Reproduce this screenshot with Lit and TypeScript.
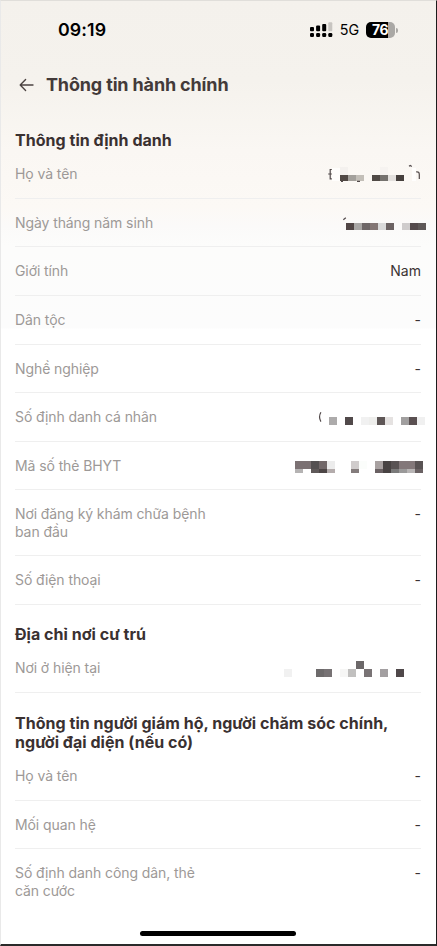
import { LitElement, html, svg, css } from "lit";
import { customElement, property } from "lit/decorators.js";

type Block = [x: number, y: number, w: number, h: number, fill: string];
interface Field {
  label: string;
  height: number;
  value?: string;
  top?: number;
  blocks?: Block[];
  strokes?: string[];
}
interface Section {
  title: string;
  kind: string;
  fields: Field[];
}

const run = (x: number, y: number, h: number, fills: string[]): Block[] =>
  fills
    .map((f, i) => [x + i * 8, y, 8, h, f] as Block)
    .filter((b) => b[4] !== "");

const sections: Section[] = [
  {
    title: "Thông tin định danh",
    kind: "identity",
    fields: [
      {
        label: "Họ và tên", height: 49, top: 150,
        blocks: [
          [332, 168, 8, 13, "#fffefc"],
          [340, 167, 8, 8, "#f4f1ee"],
          [380, 167, 8, 8, "#f6f3f0"],
          [412, 168, 4, 13, "#fffefd"],
          ...run(340, 175, 6, ["#504844", "#a3a09b", "#c3bfb8", "", "#504a46", "#75726e", "#e3e0dd", "#46403d"]),
        ],
        strokes: ["M331.8 169.5H330.2V178.8H331.8M328.2 174H331.8", "M409 166.3L410.2 165.5L411.8 166.6", "M416.2 171.9Q419.3 171.4 419.3 174.6V179", "M341 181.4H343M357 181.4H360"],
      },
      {
        label: "Ngày tháng năm sinh", height: 48, top: 199,
        blocks: run(346, 223, 7, ["#514645", "#a9a7a5", "#6e6767", "#837674", "#dadada", "#6c6363", "", "#cfcccc", "#544a4b", "#5e5857"]),
        strokes: ["M343.3 219.8L345.8 217.8"],
      },
      { label: "Giới tính", height: 49, value: "Nam" },
      { label: "Dân tộc", height: 49, value: "-" },
      { label: "Nghề nghiệp", height: 48, value: "-" },
      {
        label: "Số định danh cá nhân", height: 49, top: 393,
        blocks: run(329, 417, 8, ["#adabab", "", "#51494a", "", "#f1f1f1", "#eeeeec", "#5e5656", "#e5e2e1", "", "#a19f9f", "#5a5051", "#f0f0f0"]),
        strokes: ["M320.9 412.3Q318.2 416.9 320.9 421.6"],
      },
      {
        label: "Mã số thẻ BHYT", height: 48, top: 442,
        blocks: [
          ...run(295, 461, 8, ["#7b7173", "#7b7173", "#545051", "#726869", "#ececec", "", "", "#d0cccc", "#fbfdfb", "", "#a8a1a1", "#484343", "#595354", "#83787a", "#83787a", "#595354"]),
          ...run(295, 469, 4, ["#b5b3b3", "", "#5f5959", "#4c4545", "#b4acac", "", "", "#847c7c", "", "", "#6a6163", "#484343", "#7a7a7a", "#9a9999", "#b8b5b5", "#6a6163"]),
        ],
      },
      { label: "Nơi đăng ký khám chữa bệnh ban đầu", height: 66, value: "-" },
      { label: "Số điện thoại", height: 49, value: "-" },
    ],
  },
  {
    title: "Địa chỉ nơi cư trú",
    kind: "address",
    fields: [
      {
        label: "Nơi ở hiện tại", height: 49, top: 644,
        blocks: [
          [356, 661, 8, 8, "#6c6869"],
          ...run(284, 669, 8, ["#f1f1f1", "", "", "", "#6d6a6b", "#777274", "", "#f6f6f5", "#c1c0bf", "", "#797375", "", "#a39fa1", "", "#4f484a"]),
        ],
      },
    ],
  },
  {
    title: "Thông tin người giám hộ, người chăm sóc chính, người đại diện (nếu có)",
    kind: "guardian",
    fields: [
      { label: "Họ và tên", height: 49, value: "-" },
      { label: "Mối quan hệ", height: 48, value: "-" },
      { label: "Số định danh công dân, thẻ căn cước", height: 66, value: "-" },
    ],
  },
];

@customElement("status-bar")
class StatusBar extends LitElement {
  static styles = css`
    :host { display: flex; height: 58px; justify-content: space-between; align-items: center; padding: 0 38px 0 57px; box-sizing: border-box; color: #000; }
    .time { font-size: 17.8px; font-weight: 600; letter-spacing: 0.1px; line-height: 20px; }
    .right { display: flex; align-items: center; }
    .cell { font-size: 14.3px; line-height: 18px; letter-spacing: -0.1px; margin: 0 7px; }
    svg { display: block; }
    .battery { display: flex; align-items: center; }
    .body { width: 29px; height: 16px; border-radius: 5px; background: linear-gradient(90deg, #000 76%, #aaa8a5 76%); color: #fff; font-size: 14px; font-weight: 700; line-height: 16px; text-align: center; letter-spacing: -0.4px; box-sizing: border-box; padding-right: 1px; }
    .tip { width: 2px; height: 5px; margin-left: 1px; border-radius: 0 2px 2px 0; background: #aaa8a5; }
  `;
  render() {
    return html`
      <div class="time">09:19</div>
      <div class="right">
        <svg width="23" height="16" viewBox="0 0 23 16">
          <rect x="0" y="5" width="4" height="4.3" rx="1" />
          <rect x="6.1" y="3.5" width="4" height="5.8" rx="1" />
          <rect x="12.2" y="2" width="4" height="7.3" rx="1" />
          <rect x="18.3" y="0.3" width="4" height="9" rx="1" fill="#c8c5c1" />
          ${[0, 6.1, 12.2, 18.3].map((x) => svg`<rect x=${x} y="11" width="4" height="3.9" rx="1.2" />`)}
        </svg>
        <div class="cell">5G</div>
        <div class="battery"><div class="body">76</div><div class="tip"></div></div>
      </div>
    `;
  }
}

@customElement("field-row")
class FieldRow extends LitElement {
  @property({ attribute: false }) field!: Field;
  static styles = css`
    :host { display: block; }
    .row { position: relative; display: flex; justify-content: space-between; box-sizing: border-box; padding-top: 15px; border-bottom: 1px solid #efefef; font-size: 14px; line-height: 17.5px; }
    .label { width: 200px; color: #9d9997; letter-spacing: -0.09px; font-weight: 380; }
    .value { color: #3b3333; }
    .mask { position: absolute; top: 0; right: -6px; display: block; }
    .stroke { fill: none; stroke: #51494a; stroke-width: 1.2; }
  `;
  render() {
    const f = this.field;
    return html`<div class="row" style="height:${f.height}px">
      <div class="label">${f.label}</div>
      ${f.blocks
        ? html`<svg class="mask" width="147" height="48" viewBox="280 ${f.top} 147 48">
            ${f.blocks.map(([x, y, w, h, c]) => svg`<rect x=${x} y=${y} width=${w} height=${h} fill=${c} />`)}
            ${(f.strokes ?? []).map((d) => svg`<path class="stroke" d=${d} />`)}
          </svg>`
        : html`<div class="value">${f.value}</div>`}
    </div>`;
  }
}

@customElement("app-root")
class AppRoot extends LitElement {
  static styles = css`
    :host { display: block; font-family: Inter, "Liberation Sans", sans-serif; }
    .screen { position: relative; display: flex; flex-direction: column; box-sizing: border-box; width: 437px; height: 946px; overflow: hidden; border: solid; border-width: 1px 1px 2px 1px; border-color: #e0deda #1c1c1c #2a2a2a #e9e9e9;
      background: linear-gradient(180deg, #f4f1ec 0, #f5f2ed 80px, #faf7f3 150px, #fcf9f5 205px, #fbfaf9 225px, #fcfcfb 245px, #fcfcfc 327px, #fff 328px); }
    .bar { display: flex; align-items: center; height: 52px; padding-left: 18px; }
    .back { display: block; margin-right: 11px; }
    .title { margin: 0; font-size: 18px; line-height: 24px; font-weight: 650; letter-spacing: -0.15px; color: #433a39; }
    .section { padding: 0 15px 0 14px; }
    .heading { margin: 0; box-sizing: border-box; font-size: 16px; line-height: 19px; font-weight: 650; letter-spacing: 0.03px; color: #3a3131; height: 39px; padding-top: 20px; }
    .guardian .heading { height: 59px; padding-top: 21px; }
    .guardian field-row:last-child { overflow: hidden; height: 60px; }
    .home { position: absolute; left: 139px; bottom: 8px; width: 156px; height: 5px; border-radius: 3px; background: #000; }
  `;
  render() {
    return html`<div class="screen">
      <status-bar></status-bar>
      <div class="bar">
        <svg class="back" width="16" height="16" viewBox="0 0 16 16" fill="none" stroke="#4b4341" stroke-width="1.35" stroke-linecap="round" stroke-linejoin="round"><path d="M14 8H1.3M6.6 2.5L1.2 8L6.6 13.5" /></svg>
        <h1 class="title">Thông tin hành chính</h1>
      </div>
      ${sections.map((s) => html`<div class="section ${s.kind}">
        <h2 class="heading">${s.title}</h2>
        ${s.fields.map((f) => html`<field-row .field=${f}></field-row>`)}
      </div>`)}
      <div class="home"></div>
    </div>`;
  }
}
